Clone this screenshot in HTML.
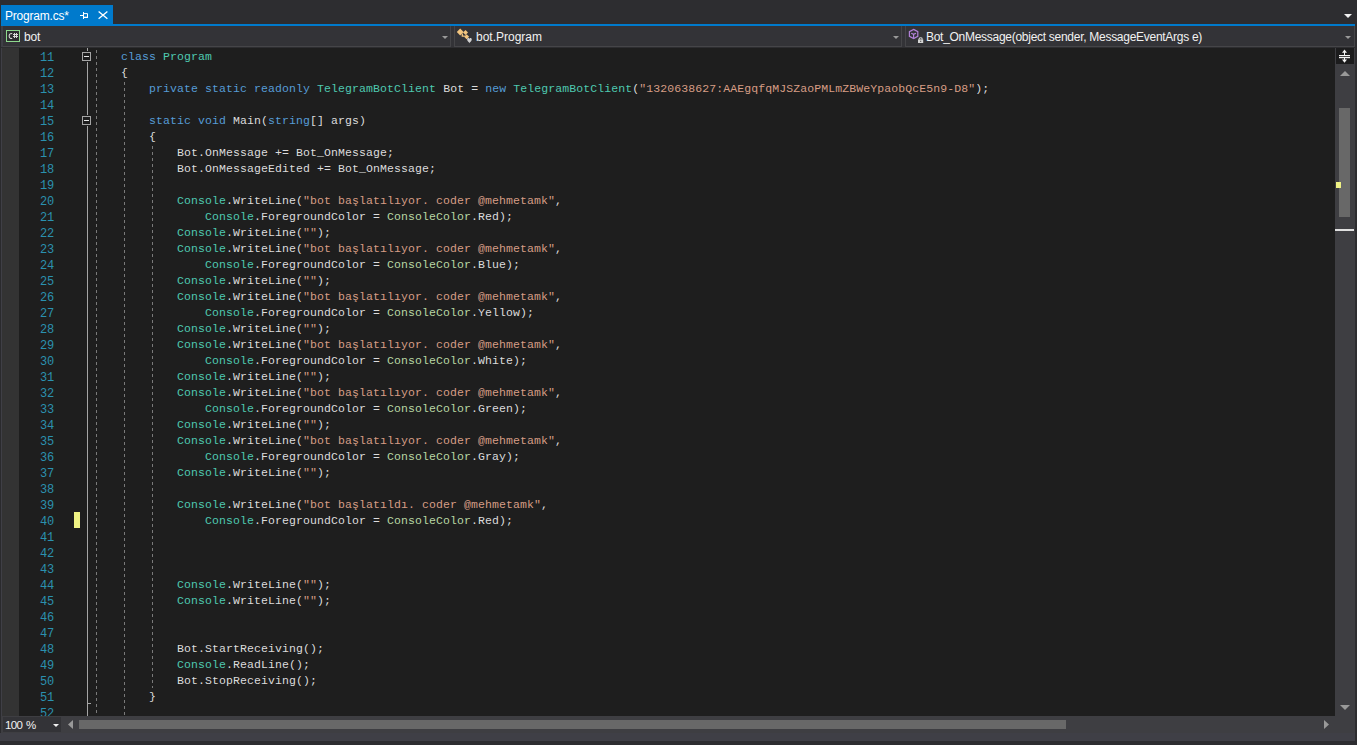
<!DOCTYPE html>
<html><head><meta charset="utf-8">
<style>
*{margin:0;padding:0;box-sizing:border-box}
html,body{width:1357px;height:745px;overflow:hidden;background:#2d2d30}
body{position:relative;font-family:"Liberation Sans",sans-serif}
.a{position:absolute}
.ui{font-family:"Liberation Sans",sans-serif;font-size:12px;letter-spacing:-0.2px;color:#f1f1f1;white-space:pre;line-height:14px}
#editor{position:absolute;left:0;top:48px;width:1335px;height:668px;background:#1e1e1e;overflow:hidden}
.ln,.cl{position:absolute;font-family:"Liberation Mono",monospace;font-size:11.5px;letter-spacing:0.1px;line-height:16px;height:16px;white-space:pre}
.ln{left:20px;width:34px;text-align:right;color:#2b91af;font-size:12px;letter-spacing:-0.2px}
.cl{color:#dcdcdc}
.k{color:#569cd6}
.t{color:#4ec9b0}
.s{color:#d69d85}
.e{color:#b8d7a3}
.vg{position:absolute;width:1px;background-image:linear-gradient(to bottom,#7a7a7a 0,#7a7a7a 3px,transparent 3px,transparent 6px);background-size:1px 6px}
</style></head><body>
<!-- tab bar -->
<div class="a" style="left:1px;top:5px;width:112px;height:20px;background:#007acc"></div>
<div class="a ui" style="left:5px;top:9px;color:#ffffff">Program.cs*</div>
<!-- pin -->
<svg class="a" style="left:78px;top:10px" width="12" height="10" viewBox="0 0 12 10"><path d="M2 5.5H5.5M5.5 2V9M5.5 3.6H9.5V7.2H5.5" stroke="#fff" stroke-width="1" fill="none"/><path d="M5.5 7H10V8H5.5Z" fill="#fff"/></svg>
<!-- close -->
<svg class="a" style="left:97px;top:10px" width="12" height="10" viewBox="0 0 12 10"><path d="M1.6 1.4L10.4 8.8M10.4 1.4L1.6 8.8" stroke="#fff" stroke-width="1.3" fill="none"/></svg>
<!-- top right dropdown -->
<svg class="a" style="left:1343px;top:13px" width="10" height="6" viewBox="0 0 10 6"><path d="M1 1H9L5 5Z" fill="#f1f1f1"/></svg>
<!-- blue line -->
<div class="a" style="left:1px;top:24px;width:1354px;height:2px;background:#007acc"></div>

<!-- nav bar -->
<div class="a" style="left:3px;top:26px;width:1352px;height:21px;background:#333337"></div>
<div class="a" style="left:0;top:26px;width:1px;height:708px;background:#2a2a2d"></div>
<div class="a" style="left:3px;top:26px;width:448px;height:21px;background:#333337;border:1px solid #454548;border-top:0;border-left:0"></div>
<div class="a" style="left:1px;top:26px;width:2px;height:21px;background:#3f3f46"></div>
<div class="a" style="left:454px;top:26px;width:448px;height:21px;background:#333337;border:1px solid #454548;border-top:0"></div>
<div class="a" style="left:905px;top:26px;width:450px;height:21px;background:#333337;border:1px solid #454548;border-top:0"></div>
<!-- C# icon -->
<svg class="a" style="left:6px;top:30px" width="14" height="12" viewBox="0 0 14 12"><rect x="0.5" y="0.5" width="13" height="11" fill="#2d2d30" stroke="#8ed88e" stroke-width="1"/>
<path d="M6.2 3.7A2.2 2.5 0 1 0 6.2 8.3" stroke="#d8d8d8" stroke-width="1.1" fill="none"/>
<path d="M8.5 3V8M10.5 3V8M7 4.5H12M7 6.5H12" stroke="#d8d8d8" stroke-width="1" fill="none"/></svg>
<div class="a ui" style="left:24px;top:30px">bot</div>
<svg class="a" style="left:441px;top:35px" width="8" height="5" viewBox="0 0 8 5"><path d="M1 1H7L4 4Z" fill="#999"/></svg>
<!-- class icon -->
<svg class="a" style="left:454px;top:26px" width="22" height="20" viewBox="0 0 22 20">
<path d="M6.2 2.6L9.6 6L6.2 9.4L2.8 6Z" fill="#f2c57f"/><path d="M11.5 3.9L14 6.4L11.5 8.9L9 6.4Z" fill="#f2c57f"/><path d="M12.6 8.2L15.1 10.7L12.6 13.2L10.1 10.7Z" fill="#f2c57f"/>
<path d="M8.3 7.5V10.2H10.8" stroke="#f2c57f" stroke-width="1.3" fill="none"/>
<path d="M13.1 13.6C13.1 11.6 15.45 11.6 15.45 13.2C15.45 11.6 17.8 11.6 17.8 13.6C17.8 15.2 15.45 16.6 15.45 17.2C15.45 16.6 13.1 15.2 13.1 13.6Z" fill="#d0d0d0"/>
</svg>
<div class="a ui" style="left:476px;top:30px;letter-spacing:0">bot.Program</div>
<svg class="a" style="left:892px;top:35px" width="8" height="5" viewBox="0 0 8 5"><path d="M1 1H7L4 4Z" fill="#999"/></svg>
<!-- method icon -->
<svg class="a" style="left:904px;top:26px" width="24" height="20" viewBox="0 0 24 20">
<path d="M9.6 3.4L13.8 5.7V10.3L9.6 12.6L5.4 10.3V5.7Z" stroke="#b180d7" stroke-width="1.2" fill="none"/>
<path d="M7.2 7.2L9.6 8.4L12 7.2M9.6 8.4V12.4" stroke="#b180d7" stroke-width="1.2" fill="none"/>
<path d="M14 13.4H19.2V17H14Z" fill="#d4d4d4"/><path d="M15.1 13.4V12.9A1.5 1.2 0 0 1 18.1 12.9V13.4" stroke="#d4d4d4" stroke-width="1.1" fill="none"/>
<rect x="16.2" y="14.8" width="1" height="1" fill="#333337"/>
</svg>
<div class="a ui" style="left:926px;top:30px;letter-spacing:-0.28px">Bot_OnMessage(object sender, MessageEventArgs e)</div>
<svg class="a" style="left:1344px;top:35px" width="8" height="5" viewBox="0 0 8 5"><path d="M1 1H7L4 4Z" fill="#999"/></svg>

<!-- editor -->
<div id="editor">
  <div class="a" style="left:2px;top:0;width:17px;height:668px;background:#333333"></div>
  <div class="a" style="left:1px;top:0;width:1px;height:668px;background:#3f3f46"></div>
  <div class="a" style="left:0;top:0;width:1px;height:668px;background:#2a2a2d"></div>
</div>
<div class="a" style="left:0;top:48px;width:1335px;height:668px;overflow:hidden">
<div class="ln" style="top:2px">11</div>
<div class="ln" style="top:18px">12</div>
<div class="ln" style="top:34px">13</div>
<div class="ln" style="top:50px">14</div>
<div class="ln" style="top:66px">15</div>
<div class="ln" style="top:82px">16</div>
<div class="ln" style="top:98px">17</div>
<div class="ln" style="top:114px">18</div>
<div class="ln" style="top:130px">19</div>
<div class="ln" style="top:146px">20</div>
<div class="ln" style="top:162px">21</div>
<div class="ln" style="top:178px">22</div>
<div class="ln" style="top:194px">23</div>
<div class="ln" style="top:210px">24</div>
<div class="ln" style="top:226px">25</div>
<div class="ln" style="top:242px">26</div>
<div class="ln" style="top:258px">27</div>
<div class="ln" style="top:274px">28</div>
<div class="ln" style="top:290px">29</div>
<div class="ln" style="top:306px">30</div>
<div class="ln" style="top:322px">31</div>
<div class="ln" style="top:338px">32</div>
<div class="ln" style="top:354px">33</div>
<div class="ln" style="top:370px">34</div>
<div class="ln" style="top:386px">35</div>
<div class="ln" style="top:402px">36</div>
<div class="ln" style="top:418px">37</div>
<div class="ln" style="top:434px">38</div>
<div class="ln" style="top:450px">39</div>
<div class="ln" style="top:466px">40</div>
<div class="ln" style="top:482px">41</div>
<div class="ln" style="top:498px">42</div>
<div class="ln" style="top:514px">43</div>
<div class="ln" style="top:530px">44</div>
<div class="ln" style="top:546px">45</div>
<div class="ln" style="top:562px">46</div>
<div class="ln" style="top:578px">47</div>
<div class="ln" style="top:594px">48</div>
<div class="ln" style="top:610px">49</div>
<div class="ln" style="top:626px">50</div>
<div class="ln" style="top:642px">51</div>
<div class="ln" style="top:658px">52</div>
<div class="cl" style="top:1px;left:121px"><span class="k">class</span> <span class="t">Program</span></div>
<div class="cl" style="top:17px;left:121px">{</div>
<div class="cl" style="top:33px;left:149px"><span class="k">private</span> <span class="k">static</span> <span class="k">readonly</span> <span class="t">TelegramBotClient</span> Bot = <span class="k">new</span> <span class="t">TelegramBotClient</span>(<span class="s">&quot;1320638627:AAEgqfqMJSZaoPMLmZBWeYpaobQcE5n9-D8&quot;</span>);</div>
<div class="cl" style="top:65px;left:149px"><span class="k">static</span> <span class="k">void</span> Main(<span class="k">string</span>[] args)</div>
<div class="cl" style="top:81px;left:149px">{</div>
<div class="cl" style="top:97px;left:177px">Bot.OnMessage += Bot_OnMessage;</div>
<div class="cl" style="top:113px;left:177px">Bot.OnMessageEdited += Bot_OnMessage;</div>
<div class="cl" style="top:145px;left:177px"><span class="t">Console</span>.WriteLine(<span class="s">&quot;bot başlatılıyor. coder @mehmetamk&quot;</span>,</div>
<div class="cl" style="top:161px;left:205px"><span class="t">Console</span>.ForegroundColor = <span class="e">ConsoleColor</span>.Red);</div>
<div class="cl" style="top:177px;left:177px"><span class="t">Console</span>.WriteLine(<span class="s">&quot;&quot;</span>);</div>
<div class="cl" style="top:193px;left:177px"><span class="t">Console</span>.WriteLine(<span class="s">&quot;bot başlatılıyor. coder @mehmetamk&quot;</span>,</div>
<div class="cl" style="top:209px;left:205px"><span class="t">Console</span>.ForegroundColor = <span class="e">ConsoleColor</span>.Blue);</div>
<div class="cl" style="top:225px;left:177px"><span class="t">Console</span>.WriteLine(<span class="s">&quot;&quot;</span>);</div>
<div class="cl" style="top:241px;left:177px"><span class="t">Console</span>.WriteLine(<span class="s">&quot;bot başlatılıyor. coder @mehmetamk&quot;</span>,</div>
<div class="cl" style="top:257px;left:205px"><span class="t">Console</span>.ForegroundColor = <span class="e">ConsoleColor</span>.Yellow);</div>
<div class="cl" style="top:273px;left:177px"><span class="t">Console</span>.WriteLine(<span class="s">&quot;&quot;</span>);</div>
<div class="cl" style="top:289px;left:177px"><span class="t">Console</span>.WriteLine(<span class="s">&quot;bot başlatılıyor. coder @mehmetamk&quot;</span>,</div>
<div class="cl" style="top:305px;left:205px"><span class="t">Console</span>.ForegroundColor = <span class="e">ConsoleColor</span>.White);</div>
<div class="cl" style="top:321px;left:177px"><span class="t">Console</span>.WriteLine(<span class="s">&quot;&quot;</span>);</div>
<div class="cl" style="top:337px;left:177px"><span class="t">Console</span>.WriteLine(<span class="s">&quot;bot başlatılıyor. coder @mehmetamk&quot;</span>,</div>
<div class="cl" style="top:353px;left:205px"><span class="t">Console</span>.ForegroundColor = <span class="e">ConsoleColor</span>.Green);</div>
<div class="cl" style="top:369px;left:177px"><span class="t">Console</span>.WriteLine(<span class="s">&quot;&quot;</span>);</div>
<div class="cl" style="top:385px;left:177px"><span class="t">Console</span>.WriteLine(<span class="s">&quot;bot başlatılıyor. coder @mehmetamk&quot;</span>,</div>
<div class="cl" style="top:401px;left:205px"><span class="t">Console</span>.ForegroundColor = <span class="e">ConsoleColor</span>.Gray);</div>
<div class="cl" style="top:417px;left:177px"><span class="t">Console</span>.WriteLine(<span class="s">&quot;&quot;</span>);</div>
<div class="cl" style="top:449px;left:177px"><span class="t">Console</span>.WriteLine(<span class="s">&quot;bot başlatıldı. coder @mehmetamk&quot;</span>,</div>
<div class="cl" style="top:465px;left:205px"><span class="t">Console</span>.ForegroundColor = <span class="e">ConsoleColor</span>.Red);</div>
<div class="cl" style="top:529px;left:177px"><span class="t">Console</span>.WriteLine(<span class="s">&quot;&quot;</span>);</div>
<div class="cl" style="top:545px;left:177px"><span class="t">Console</span>.WriteLine(<span class="s">&quot;&quot;</span>);</div>
<div class="cl" style="top:593px;left:177px">Bot.StartReceiving();</div>
<div class="cl" style="top:609px;left:177px"><span class="t">Console</span>.ReadLine();</div>
<div class="cl" style="top:625px;left:177px">Bot.StopReceiving();</div>
<div class="cl" style="top:641px;left:149px">}</div>
</div>
<!-- fold outline -->
<div class="a" style="left:87px;top:48px;width:1px;height:3px;background:#a5a5a5"></div>
<div class="a" style="left:82px;top:52px;width:9px;height:9px;border:1px solid #a5a5a5"></div>
<div class="a" style="left:84px;top:56px;width:5px;height:1px;background:#e6e6e6"></div>
<div class="a" style="left:87px;top:62px;width:1px;height:53px;background:#a5a5a5"></div>
<div class="a" style="left:82px;top:116px;width:9px;height:9px;border:1px solid #a5a5a5"></div>
<div class="a" style="left:84px;top:120px;width:5px;height:1px;background:#e6e6e6"></div>
<div class="a" style="left:87px;top:126px;width:1px;height:590px;background:#a5a5a5"></div>
<div class="a" style="left:87px;top:703px;width:4px;height:1px;background:#a5a5a5"></div>
<!-- change marker -->
<div class="a" style="left:74px;top:512px;width:6px;height:16px;background:#eff284"></div>
<!-- indent guides -->
<div class="vg" style="left:96px;top:50px;height:666px"></div>
<div class="vg" style="left:124px;top:82px;height:634px"></div>
<div class="vg" style="left:152px;top:146px;height:542px"></div>

<!-- vertical scrollbar -->
<div class="a" style="left:1335px;top:48px;width:20px;height:685px;background:#3e3e42"></div>
<div class="a" style="left:1355px;top:26px;width:2px;height:719px;background:#2d2d30"></div>
<svg class="a" style="left:1336px;top:48px" width="18" height="16" viewBox="0 0 18 16">
<rect x="0" y="0" width="18" height="16" fill="#1c1c1d"/>
<rect x="3" y="7" width="11" height="1.2" fill="#f4f4f4"/><rect x="3" y="9" width="11" height="1.2" fill="#f4f4f4"/>
<rect x="8" y="3" width="1" height="4" fill="#f4f4f4"/><path d="M8.5 1.6L11 4.8H6Z" fill="#f4f4f4"/>
<rect x="8" y="10" width="1" height="4" fill="#f4f4f4"/><path d="M6 11.4H11L8.5 14.8Z" fill="#f4f4f4"/>
</svg>
<svg class="a" style="left:1339px;top:70px" width="12" height="7" viewBox="0 0 12 7"><path d="M1 6H11L6 1Z" fill="#999"/></svg>
<div class="a" style="left:1339px;top:108px;width:11px;height:109px;background:#686868"></div>
<div class="a" style="left:1336px;top:182px;width:5px;height:6px;background:#eff284"></div>
<div class="a" style="left:1335px;top:229px;width:19px;height:2px;background:#e0e0e0"></div>
<svg class="a" style="left:1339px;top:704px" width="12" height="7" viewBox="0 0 12 7"><path d="M1 1H11L6 6Z" fill="#999"/></svg>

<!-- horizontal scrollbar -->
<div class="a" style="left:1px;top:716px;width:1334px;height:17px;background:#3e3e42"></div>
<div class="a" style="left:3px;top:717px;width:58px;height:15px;background:#333337"></div>
<div class="a ui" style="left:5px;top:718px;font-size:11.5px;letter-spacing:-0.6px">100</div><div class="a ui" style="left:26px;top:718px;font-size:11.5px">%</div>
<svg class="a" style="left:52px;top:723px" width="8" height="5" viewBox="0 0 8 5"><path d="M1 1H7L4 4Z" fill="#f1f1f1"/></svg>
<svg class="a" style="left:67px;top:719px" width="7" height="11" viewBox="0 0 7 11"><path d="M6 1V10L1 5.5Z" fill="#999"/></svg>
<div class="a" style="left:79px;top:720px;width:987px;height:9px;background:#686868"></div>
<svg class="a" style="left:1323px;top:719px" width="7" height="11" viewBox="0 0 7 11"><path d="M1 1V10L6 5.5Z" fill="#999"/></svg>
<!-- bottom strip -->
<div class="a" style="left:0;top:733px;width:1355px;height:8px;background:#3f3f46"></div>
<div class="a" style="left:0;top:741px;width:1355px;height:4px;background:#2d2d30"></div>
</body></html>
